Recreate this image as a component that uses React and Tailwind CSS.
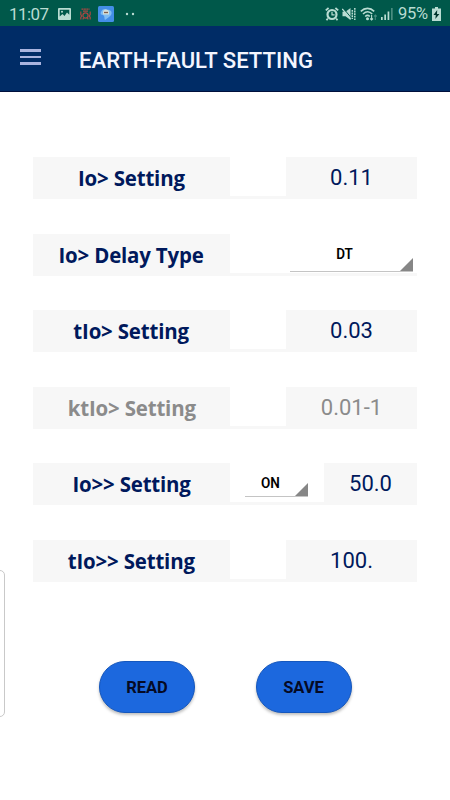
// Earth-fault relay setting screen
const ROWS = [
  { id: "io", label: "Io> Setting", value: "0.11" },
  { id: "ioDelay", label: "Io> Delay Type", select: "DT" },
  { id: "tio", label: "tIo> Setting", value: "0.03" },
  { id: "ktio", label: "ktIo> Setting", value: "0.01-1", disabled: true },
  { id: "io2", label: "Io>> Setting", value: "50.0", select: "ON" },
  { id: "tio2", label: "tIo>> Setting", value: "100." },
];

function StatusBar() {
  return (
    <div className="flex h-[26px] items-center bg-[#00584a] pl-[9px] pt-[1px] text-[#b9dcd2]">
      <span className="w-[49px] pt-[2px] text-[17px] leading-none tracking-[-0.6px]">11:07</span>
      <svg className="h-[12px] w-[13px]" viewBox="0 0 13 12">
        <rect width="13" height="12" rx="1" fill="currentColor" />
        <path d="M1.700 1.700h9.600v5L9 4.600 6.500 8 4.500 6 1.700 8.500z" fill="#00584a" />
        <circle cx="4" cy="3.800" r="1" fill="currentColor" />
      </svg>
      <svg
        className="ml-[9px] h-[12px] w-[11px]"
        viewBox="0 0 11 12"
        fill="none"
        stroke="#a94743"
        strokeWidth="1.2"
      >
        <path d="M1.500 1.200h8" strokeDasharray="2 .4" />
        <path d="M.8 3.500v3l.8 1.500-.8 1.500v2M10.200 3.500v3L9.400 8l.8 1.500v2M3 3.200h5M2.700 11.400l1-1.400M8.300 11.400l-1-1.400" />
        <circle cx="5.500" cy="7.500" r="2.600" />
      </svg>
      <svg className="ml-[7px] h-[16px] w-[16px]" viewBox="0 0 16 16">
        <rect width="16" height="16" rx="1.5" fill="#438ee8" />
        <path d="M3 6c2-4 5-3 6-2 3-1 6 2 4 5-1 2-4 3-6 5-1-2 0-4-2-5C3 9 2 8 3 6z" fill="#80bdf3" />
        <path d="M5 6a3 2.500 0 0 1 6 0v2.500H5z" fill="#d4dfda" />
        <path d="M6 6.500h4" stroke="#805f52" strokeWidth="1.3" />
      </svg>
      <svg className="ml-[11px] h-[4px] w-[10px]" viewBox="0 0 10 4" fill="currentColor">
        <circle cx="2" cy="2" r="1.2" />
        <circle cx="8" cy="2" r="1.2" />
      </svg>

      <svg
        className="ml-auto h-[14px] w-[14px]"
        viewBox="0 0 14 14"
        fill="none"
        stroke="currentColor"
      >
        <circle cx="7" cy="7.5" r="4.5" strokeWidth="2.200" />
        <path d="M.8 3.4L3.6 1M13.2 3.4L10.4 1M2.8 11.5l-1.3 1.7M11.2 11.5l1.3 1.7" strokeWidth="1.8" />
        <path d="M7 4.8v3h2.6" strokeWidth="1.2" />
      </svg>
      <svg
        className="ml-[3px] h-[14px] w-[14px]"
        viewBox="0 0 14 14"
        fill="none"
        stroke="currentColor"
      >
        <path d="M.5 4.800h3L8.500 1v12L3.500 9.200h-3z" fill="currentColor" stroke="none" />
        <path d="M1.500 1.500l7.500 9" stroke="#00584a" strokeWidth="1" />
        <path d="M.3 1.800l8.200 10.400" strokeWidth="1.3" />
        <path d="M10.300 3v9M12.800 1v12" strokeWidth="1.5" strokeDasharray="1.800 .8" />
      </svg>
      <svg
        className="ml-[4px] h-[14px] w-[18px]"
        viewBox="0 0 18 14"
        fill="none"
        stroke="currentColor"
        strokeWidth="1.6"
      >
        <path d="M.8 4.4c4-4 9.500-4 13.400 0M3 7c3-2.800 6.400-2.800 9.200 0M5.200 9.500c1.600-1.400 3.200-1.400 4.600 0" />
        <circle cx="7.500" cy="11.700" r=".7" fill="currentColor" />
        <path d="M11.600 8v5M10.200 11.500l1.400 1.500 1.400-1.500" strokeWidth="1.1" />
        <path d="M15.300 13V8M14 9.500L15.300 8l1.400 1.500" strokeWidth="1.1" opacity=".4" />
      </svg>
      <svg className="ml-[3px] h-[13px] w-[12px]" viewBox="0 0 12 13" fill="currentColor">
        <path d="M0 10h1.700v3H0zM3.300 7.500H5V13H3.300zM6.600 4.500h1.700V13H6.600z" />
        <path d="M10 1h1.700v12H10z" opacity=".4" />
      </svg>
      <span className="ml-[5px] w-[30px] pt-[2px] text-[16.5px] leading-none tracking-[-0.3px]">95%</span>
      <svg className="ml-[4px] mr-[9px] h-[14px] w-[9px]" viewBox="0 0 9 14">
        <path d="M3 0h3v1.500h3V14H0V1.500h3z" fill="currentColor" />
        <path d="M5.200 3L1.500 8h2.300l-.5 4L7.400 7H5z" fill="#00352c" />
      </svg>
    </div>
  );
}

function Spinner({ value, className }) {
  return (
    <div
      className={`relative flex justify-center border-b border-[#c4c4c4] leading-none text-black ${className}`}
    >
      <span className="scale-y-[1.08] text-[13.5px] font-semibold">{value}</span>
      <svg className="absolute bottom-0 right-0 h-[13px] w-[13px]" viewBox="0 0 13 13">
        <path d="M13 0v13H0z" fill="#868686" />
      </svg>
    </div>
  );
}

function SettingRow({ row }) {
  const color = row.disabled ? "text-[#8b8b8b]" : "text-[#00195c]";
  const onlySelect = row.select && !row.value;

  return (
    <div className="flex h-[42px] bg-[#f7f7f7]">
      <div
        className={`flex w-[197px] items-center justify-center whitespace-nowrap pb-[1px] font-['Open_Sans'] text-[22px] font-bold tracking-[-0.2px] ${color}`}
      >
        <span className="origin-center scale-x-[0.93]">{row.label}</span>
      </div>
      {onlySelect ? (
        <div className="flex h-[39px] flex-1 bg-white pl-[60px] pr-[4px]">
          <Spinner value={row.select} className="h-[38px] w-full pr-[14px] pt-[14px]" />
        </div>
      ) : row.select ? (
        <div className="h-[39px] w-[94px] bg-white pl-[15px]">
          <Spinner value={row.select} className="h-[34px] w-[63px] pr-[12px] pt-[14px]" />
        </div>
      ) : (
        <div className="h-[39px] w-[56px] bg-white" />
      )}
      {row.value && (
        <div
          className={`flex flex-1 items-center justify-center text-[22px] leading-none ${color}`}
        >
          {row.value}
        </div>
      )}
    </div>
  );
}

function ActionButton({ children }) {
  return (
    <button
      type="button"
      className="h-[52px] w-[96px] rounded-full border border-[#1557bd] bg-[#1c68de] pt-[2px] text-[16.5px] font-bold text-[#050a24] shadow-[0_2px_3px_rgba(0,0,0,0.25)]"
    >
      {children}
    </button>
  );
}

export default function App() {
  return (
    <div className="relative h-[800px] w-[450px] overflow-hidden bg-white font-[Roboto,sans-serif]">
      <StatusBar />
      <header className="flex h-[66px] items-center border-b border-[#00103c] bg-[#002c66] pl-[20px]">
        <div className="mb-[3px] flex w-[21px] flex-col gap-[4px]">
          <span className="h-[3px] bg-[#a9b4df]" />
          <span className="h-[2px] bg-[#a9b4df]" />
          <span className="h-[3px] bg-[#a9b4df]" />
        </div>
        <h1 className="ml-[38px] mt-[3px] whitespace-nowrap text-[22.1px] font-medium leading-none text-[#f4f6ff]">
          EARTH-FAULT SETTING
        </h1>
      </header>

      <main className="flex flex-col gap-[34.6px] px-[33px] pt-[65px]">
        {ROWS.map((row) => (
          <SettingRow key={row.id} row={row} />
        ))}
      </main>

      <div className="flex gap-[60.5px] pl-[99px] pt-[79px]">
        <ActionButton>READ</ActionButton>
        <ActionButton>SAVE</ActionButton>
      </div>

      {/* edge panel handle */}
      <div className="absolute left-[-6px] top-[570px] h-[147px] w-[11px] rounded-[5px] border border-[#c9c9c9] bg-white" />
    </div>
  );
}
